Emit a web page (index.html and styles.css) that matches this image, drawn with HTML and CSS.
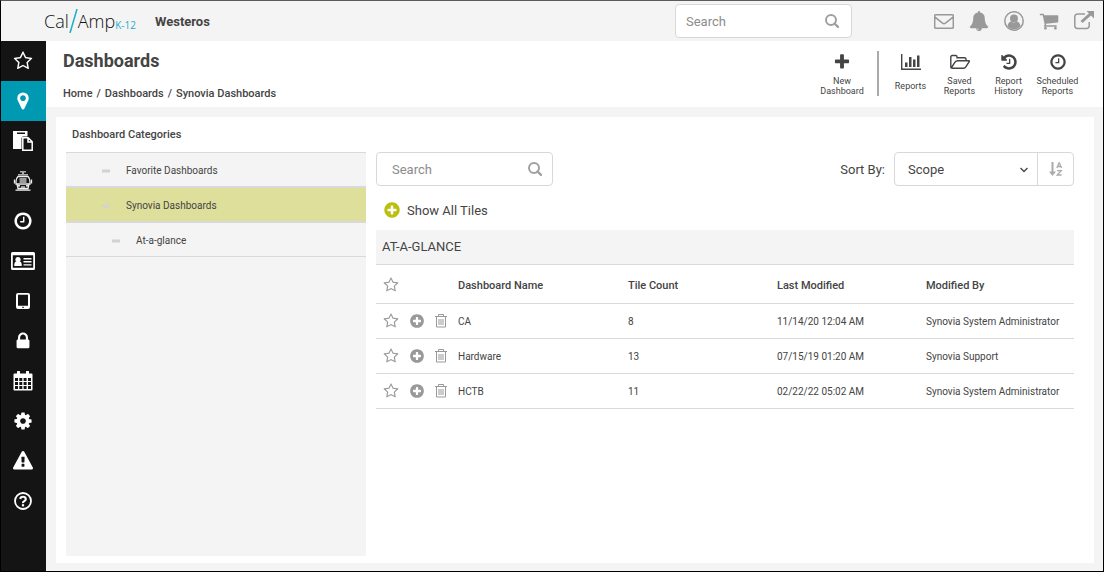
FILE: index.html
```html
<!DOCTYPE html>
<html lang="en">
<head>
    <meta charset="UTF-8">
    <meta name="viewport" content="width=device-width, initial-scale=1.0">
    <title>Dashboards</title>
    <link rel="stylesheet" href="styles.css">
</head>
<body>
    <!-- Shared icons -->
    <svg class="sprite" aria-hidden="true">
        <symbol id="star" viewBox="0 0 1792 1792"><path d="M1201 1004l306-297-422-62-189-382-189 382-422 62 306 297-73 421 378-199 377 199zm527-357q0 22-26 48l-363 354 86 500q1 7 1 20 0 50-41 50-19 0-40-12l-449-236-449 236q-22 12-40 12-21 0-31.5-14.5t-10.5-35.5q0-6 2-20l86-500-364-354q-25-27-25-48 0-37 56-46l502-73 225-455q19-41 49-41t49 41l225 455 502 73q56 9 56 46z"/></symbol>
        <symbol id="clock" viewBox="0 0 1792 1792"><path d="M1024 544v448q0 14-9 23t-23 9h-320q-14 0-23-9t-9-23v-64q0-14 9-23t23-9h224v-352q0-14 9-23t23-9h64q14 0 23 9t9 23zm416 352q0-148-73-273t-198-198-273-73-273 73-198 198-73 273 73 273 198 198 273 73 273-73 198-198 73-273zm224 0q0 209-103 385.5t-279.5 279.5-385.5 103-385.5-103-279.5-279.5-103-385.5 103-385.5 279.5-279.5 385.5-103 385.5 103 279.5 279.5 103 385.5z"/></symbol>
        <symbol id="plus-circle" viewBox="0 0 1792 1792"><path d="M1344 960v-128q0-26-19-45t-45-19h-256v-256q0-26-19-45t-45-19h-128q-26 0-45 19t-19 45v256h-256q-26 0-45 19t-19 45v128q0 26 19 45t45 19h256v256q0 26 19 45t45 19h128q26 0 45-19t19-45v-256h256q26 0 45-19t19-45zm320-64q0 209-103 385.5t-279.5 279.5-385.5 103-385.5-103-279.5-279.5-103-385.5 103-385.5 279.5-279.5 385.5-103 385.5 103 279.5 279.5 103 385.5z"/></symbol>
        <symbol id="search" viewBox="0 0 14 14"><circle cx="6" cy="6" r="5" fill="none" stroke="currentColor" stroke-width="2"/><path d="M9.5 9.5l3.5 3.3" stroke="currentColor" stroke-width="2.4" stroke-linecap="round"/></symbol>
        <symbol id="trash" viewBox="0 0 12 14"><path d="M0 2.500h12M3.500 2.500v-2h5v2M1.500 2.500v10.500h9v-10.500M4 5v6M6 5v6M8 5v6" fill="none" stroke="currentColor"/></symbol>
    </svg>

    <header class="topbar">
        <a class="logo" href="#" aria-label="CalAmp K-12">
            <span>Cal</span>
            <svg class="slash" viewBox="0 0 9 24"><path d="M8 0L1 24" stroke="#18afc9" stroke-width="1.5"/></svg>
            <span>Amp</span>
            <span class="logo-sub">K-12</span>
        </a>
        <span class="district">Westeros</span>
        <form class="search-box">
            <input type="search" placeholder="Search" aria-label="Search site">
            <button type="button" aria-label="Search"><svg><use href="#search"/></svg></button>
        </form>
        <nav class="top-icons">
            <a href="#" aria-label="Messages"><svg viewBox="0 0 20 20"><path d="M1.500 3.700h17a.8.8 0 0 1 .8.8v12a.8.8 0 0 1-.8.8h-17a.8.8 0 0 1-.8-.8v-12a.8.8 0 0 1 .8-.8zM1 6.200l7.500 6q1.500 1.100 3 0L19 6.200" fill="none" stroke="currentColor" stroke-width="1.500"/></svg></a>
            <a href="#" aria-label="Notifications"><svg viewBox="0 0 1792 1792"><path d="M912 1696q0-16-16-16-59 0-101.500-42.500t-42.500-101.500q0-16-16-16t-16 16q0 73 51.500 124.500t124.500 51.500q16 0 16-16zm816-288q0 52-38 90t-90 38h-448q0 106-75 181t-181 75-181-75-75-181h-448q-52 0-90-38t-38-90q50-42 91-88t85-119.500 74.500-158.500 50-206 19.500-260q0-152 117-282.500t307-158.500q-8-19-8-39 0-40 28-68t68-28 68 28 28 68q0 20-8 39 190 28 307 158.500t117 282.500q0 139 19.500 260t50 206 74.500 158.500 85 119.500 91 88z"/></svg></a>
            <a href="#" aria-label="Account"><svg viewBox="0 0 20 20"><circle cx="10" cy="10" r="9.200" fill="none" stroke="currentColor" stroke-width="1.500"/><circle cx="10" cy="7.500" r="4"/><path d="M3.500 15c.6-3 2-4.500 3.700-4.500q2.800 2.300 5.600 0c1.700 0 3.100 1.500 3.700 4.500a8 8 0 0 1-13 0z"/></svg></a>
            <a href="#" aria-label="Cart"><svg viewBox="0 0 1792 1792"><path d="M704 1536q0 52-38 90t-90 38-90-38-38-90 38-90 90-38 90 38 38 90zm896 0q0 52-38 90t-90 38-90-38-38-90 38-90 90-38 90 38 38 90zm128-1088v512q0 24-16.500 42.500t-40.500 21.500l-1044 122q13 60 13 70 0 16-24 64h920q26 0 45 19t19 45-19 45-45 19h-1024q-26 0-45-19t-19-45q0-11 8-31.500t16-36 21.500-40 15.500-29.500l-177-823h-204q-26 0-45-19t-19-45 19-45 45-19h256q16 0 28.500 6.500t19.500 15.500 13 24.500 8 26 5.500 29.500 4.500 26h1201q26 0 45 19t19 45z"/></svg></a>
            <a href="#" aria-label="Sign out"><svg viewBox="0 0 20 20"><path d="M11 3H3.500A2.700 2.700 0 0 0 .8 5.700v9A2.700 2.700 0 0 0 3.500 17.400h9a2.700 2.700 0 0 0 2.700-2.700V11" fill="none" stroke="currentColor" stroke-width="1.500"/><path d="M7.500 11L16.500 2.800" stroke="currentColor" stroke-width="3"/><path d="M12.500 0H20v7.500z"/></svg></a>
        </nav>
    </header>

    <div class="app">
        <nav class="sidebar">
            <a href="#" aria-label="Favorites"><svg><use href="#star"/></svg></a>
            <a href="#" class="active" aria-label="Map"><svg viewBox="0 0 1792 1792"><path d="M1152 640q0-106-75-181t-181-75-181 75-75 181 75 181 181 75 181-75 75-181zm256 0q0 109-33 179l-364 774q-16 33-47.500 52t-67.500 19-67.500-19-46.500-52l-365-774q-33-70-33-179 0-212 150-362t362-150 362 150 150 362z"/></svg></a>
            <a href="#" aria-label="Documents"><svg viewBox="0 0 20 20"><path fill-rule="evenodd" d="M0 0h14.500v5.500H9.500L8.500 7v11H0zM4 1.500v1.500h8v-1.500z"/><path d="M9.800 6.800h5.400l4 4v8.500H9.800zM15 7v4h4.500" fill="none" stroke="currentColor" stroke-width="1.500"/></svg></a>
            <a href="#" aria-label="Buses"><svg viewBox="0 0 20 20"><path d="M7 0h6v1.500h-2V3H9V1.500H7z" fill="#aaa"/><path d="M5 3h10v1.500H5z" fill="#aaa"/><path d="M5 5.500h10q2 2 2 5v2.500H3v-2.500q0-3 2-5z" fill="none" stroke="#eee" stroke-width="1.300"/><path d="M6.500 7h7v5.500h-7zM8 15h4v2H8z" fill="#999"/><path d="M1.500 8.500v4M18.500 8.500v4M4 13l1 4.500h10l1-4.500M2.500 19.200h15" fill="none" stroke="#eee" stroke-width="1.300"/><circle cx="6" cy="14.700" r="1"/><circle cx="14" cy="14.700" r="1"/></svg></a>
            <a href="#" aria-label="Time"><svg><use href="#clock"/></svg></a>
            <a href="#" aria-label="Cards"><svg class="wide" viewBox="0 0 24 18"><path fill-rule="evenodd" d="M1.500 0h21A1.500 1.500 0 0 1 24 1.500v15a1.500 1.500 0 0 1-1.500 1.500h-21A1.500 1.500 0 0 1 0 16.500v-15A1.500 1.500 0 0 1 1.500 0zM1.800 3.200v12.600h20.400V3.200z"/><circle cx="7" cy="7.500" r="2.600"/><path d="M3.200 14q0-4.500 2-4.500h3.600q2 0 2 4.500zM12.500 6h8v1.400h-8zM12.500 9h8v1.400h-8zM12.500 12.200h8v1.400h-8z"/></svg></a>
            <a href="#" aria-label="Tablets"><svg viewBox="0 0 20 20"><path fill-rule="evenodd" d="M5 2h10q2 0 2 2v12q0 2-2 2H5q-2 0-2-2V4q0-2 2-2zM5 3.700v11h10v-11zM9.300 15.700v1.300h1.400v-1.300z"/></svg></a>
            <a href="#" aria-label="Security"><svg viewBox="0 0 1792 1792"><path d="M640 768h512v-192q0-106-75-181t-181-75-181 75-75 181v192zm832 96v576q0 40-28 68t-68 28h-960q-40 0-68-28t-28-68v-576q0-40 28-68t68-28h32v-192q0-184 132-316t316-132 316 132 132 316v192h32q40 0 68 28t28 68z"/></svg></a>
            <a href="#" aria-label="Calendar"><svg viewBox="0 0 20 20"><path fill-rule="evenodd" d="M1.500 2.500H4V1a1 1 0 0 1 3 0v1.500h6V1a1 1 0 0 1 3 0v1.500h2.500a1 1 0 0 1 1 1v15a1 1 0 0 1-1 1h-17a1 1 0 0 1-1-1v-15a1 1 0 0 1 1-1zM2 7v3h3V7zM6.300 7v3h3V7zM10.600 7v3h3V7zM15 7v3h3V7zM2 11v3h3v-3zM6.300 11v3h3v-3zM10.600 11v3h3v-3zM15 11v3h3v-3zM2 15v3h3v-3zM6.300 15v3h3v-3zM10.600 15v3h3v-3zM15 15v3h3v-3z"/></svg></a>
            <a href="#" aria-label="Settings"><svg viewBox="0 0 1792 1792"><path d="M1152 896q0-106-75-181t-181-75-181 75-75 181 75 181 181 75 181-75 75-181zm512-109v222q0 12-8 23t-20 13l-185 28q-19 54-39 91 35 50 107 138 10 12 10 25t-9 23q-27 37-99 108t-94 71q-12 0-26-9l-138-108q-44 23-91 38-16 136-29 186-7 28-36 28h-222q-14 0-24.500-8.500t-11.500-21.500l-28-184q-49-16-90-37l-141 107q-10 9-25 9-14 0-25-11-126-114-165-168-7-10-7-23 0-12 8-23 15-21 51-66.500t54-70.500q-27-50-41-99l-183-27q-13-2-21-12.500t-8-23.500v-222q0-12 8-23t19-13l186-28q14-46 39-92-40-57-107-138-10-12-10-24 0-10 9-23 26-36 98.500-107.500t94.500-71.500q13 0 26 10l138 107q44-23 91-38 16-136 29-186 7-28 36-28h222q14 0 24.500 8.500t11.500 21.500l28 184q49 16 90 37l142-107q9-9 24-9 13 0 25 10 129 119 165 170 7 8 7 22 0 12-8 23-15 21-51 66.500t-54 70.500q26 50 41 98l183 28q13 2 21 12.500t8 23.500z"/></svg></a>
            <a href="#" aria-label="Alerts"><svg viewBox="0 0 1792 1792"><path d="M1024 1375v-190q0-14-9.500-23.500t-22.500-9.500h-192q-13 0-22.500 9.500t-9.500 23.500v190q0 14 9.500 23.500t22.500 9.500h192q13 0 22.500-9.500t9.500-23.500zm-2-374l18-459q0-12-10-19-13-11-24-11h-220q-11 0-24 11-10 7-10 21l17 457q0 10 10 16.500t24 6.500h185q14 0 23.500-6.500t10.500-16.500zm-14-934l768 1408q35 63-2 126-17 29-46.500 46t-63.500 17h-1536q-34 0-63.500-17t-46.500-46q-37-63-2-126l768-1408q17-31 47-49t65-18 65 18 47 49z"/></svg></a>
            <a href="#" aria-label="Help"><svg viewBox="0 0 20 20"><circle cx="10" cy="10" r="8" fill="none" stroke="currentColor" stroke-width="1.800"/><path d="M7.200 8Q7.500 5.700 10 5.700T12.800 8Q12.800 9.300 11.300 10.100T10 12.200" fill="none" stroke="currentColor" stroke-width="2.100"/><path d="M8.900 13.200h2.200v2.200H8.900z"/></svg></a>
        </nav>

        <main class="main">
            <div class="page-head">
                <div>
                    <h1>Dashboards</h1>
                    <nav class="breadcrumb">
                        <a href="#">Home</a><span>/</span><a href="#">Dashboards</a><span>/</span><a href="#">Synovia Dashboards</a>
                    </nav>
                </div>
                <div class="actions">
                    <button type="button" class="action action-new">
                        <svg viewBox="0 0 1792 1792"><path d="M1600 736v192q0 40-28 68t-68 28h-416v416q0 40-28 68t-68 28h-192q-40 0-68-28t-28-68v-416h-416q-40 0-68-28t-28-68v-192q0-40 28-68t68-28h416v-416q0-40 28-68t68-28h192q40 0 68 28t28 68v416h416q40 0 68 28t28 68z"/></svg>
                        <span>New<br>Dashboard</span>
                    </button>
                    <button type="button" class="action">
                        <svg viewBox="0 0 20 16"><path d="M0 0h1.400v14.500H20V16H0zM4 8.500h2.500V13H4zM8 3h2.500v10H8zM12 5.500h2.500V13H12zM16 1.500h2.500V13H16z"/></svg>
                        <span>Reports</span>
                    </button>
                    <button type="button" class="action">
                        <svg viewBox="0 0 20 16"><path d="M.8 13V3Q.8 1.500 2.300 1.500h3.500Q7 1.500 7 3v.7h7.500Q16 3.700 16 5v1.700M1.200 14L5 8.200Q6 6.700 7.500 6.700H19q.8 0 .2 1L16 12.700Q15 14.300 13.500 14.300H2.300Q.8 14.300.8 13" fill="none" stroke="currentColor" stroke-width="1.400"/></svg>
                        <span>Saved<br>Reports</span>
                    </button>
                    <button type="button" class="action">
                        <svg viewBox="0 0 1792 1792"><path d="M1664 896q0 156-61 298t-164 245-245 164-298 61q-172 0-327-72.500t-264-204.500q-7-10-6.500-22.500t8.500-20.500l137-138q10-9 25-9 16 2 23 12 73 95 179 147t225 52q104 0 198.500-40.500t163.500-109.500 109.500-163.500 40.500-198.500-40.500-198.500-109.500-163.500-163.500-109.500-198.500-40.500q-98 0-188 35.500t-160 101.500l137 138q31 30 14 69-17 40-59 40h-448q-26 0-45-19t-19-45v-448q0-42 40-59 39-17 69 14l130 129q107-101 244.500-156.500t284.500-55.500q156 0 298 61t245 164 164 245 61 298zm-640-288v448q0 14-9 23t-23 9h-320q-14 0-23-9t-9-23v-64q0-14 9-23t23-9h224v-352q0-14 9-23t23-9h64q14 0 23 9t9 23z"/></svg>
                        <span>Report<br>History</span>
                    </button>
                    <button type="button" class="action">
                        <svg><use href="#clock"/></svg>
                        <span>Scheduled<br>Reports</span>
                    </button>
                </div>
            </div>

            <div class="panel">
                <aside class="categories">
                    <h2>Dashboard Categories</h2>
                    <ul>
                        <li><a href="#"><svg viewBox="0 0 8 8"><path d="M0 4h8" stroke="currentColor" stroke-width="3"/></svg>Favorite Dashboards</a></li>
                        <li class="selected"><a href="#"><svg viewBox="0 0 8 8"><path d="M.5 2.500L4 6l3.500-3.500" fill="none" stroke="currentColor" stroke-width="2"/></svg>Synovia Dashboards</a></li>
                        <li class="child"><a href="#"><svg viewBox="0 0 8 8"><path d="M0 4h8" stroke="currentColor" stroke-width="3"/></svg>At-a-glance</a></li>
                    </ul>
                </aside>

                <section class="content">
                    <div class="filters">
                        <form class="search-box">
                            <input type="search" placeholder="Search" aria-label="Search dashboards">
                            <button type="button" aria-label="Search"><svg><use href="#search"/></svg></button>
                        </form>
                        <div class="sort">
                            <label for="sort-by">Sort By:</label>
                            <div class="sort-group">
                                <select id="sort-by">
                                    <option>Scope</option>
                                    <option>Name</option>
                                </select>
                                <svg class="chevron" viewBox="0 0 8 6"><path d="M.5 1L4 4.500 7.500 1" fill="none" stroke="currentColor" stroke-width="1.300"/></svg>
                                <button type="button" aria-label="Sort direction"><svg viewBox="0 0 14 14"><path d="M3.500 0v12" stroke="currentColor" stroke-width="2"/><path d="M0 9.500h7L3.500 14z"/><path d="M7.800 6L10.200 .6 12.600 6M8.600 4.500h3.200M8 8.700h4.200L8.200 13h4.400" fill="none" stroke="currentColor" stroke-width="1.300"/></svg></button>
                            </div>
                        </div>
                    </div>
                    <button type="button" class="show-all"><svg><use href="#plus-circle"/></svg>Show All Tiles</button>
                    <h3>AT-A-GLANCE</h3>
                    <table>
                        <thead>
                            <tr>
                                <th class="col-icons"><div class="row-icons"><button type="button" aria-label="Favorite all"><svg><use href="#star"/></svg></button></div></th>
                                <th class="col-name">Dashboard Name</th>
                                <th class="col-data">Tile Count</th>
                                <th class="col-data">Last Modified</th>
                                <th>Modified By</th>
                            </tr>
                        </thead>
                        <tbody>
                            <tr>
                                <td><div class="row-icons"><button type="button" aria-label="Favorite"><svg><use href="#star"/></svg></button><button type="button" aria-label="Add"><svg><use href="#plus-circle"/></svg></button><button type="button" aria-label="Delete"><svg class="trash"><use href="#trash"/></svg></button></div></td>
                                <td>CA</td>
                                <td>8</td>
                                <td>11/14/20 12:04 AM</td>
                                <td>Synovia System Administrator</td>
                            </tr>
                            <tr>
                                <td><div class="row-icons"><button type="button" aria-label="Favorite"><svg><use href="#star"/></svg></button><button type="button" aria-label="Add"><svg><use href="#plus-circle"/></svg></button><button type="button" aria-label="Delete"><svg class="trash"><use href="#trash"/></svg></button></div></td>
                                <td>Hardware</td>
                                <td>13</td>
                                <td>07/15/19 01:20 AM</td>
                                <td>Synovia Support</td>
                            </tr>
                            <tr>
                                <td><div class="row-icons"><button type="button" aria-label="Favorite"><svg><use href="#star"/></svg></button><button type="button" aria-label="Add"><svg><use href="#plus-circle"/></svg></button><button type="button" aria-label="Delete"><svg class="trash"><use href="#trash"/></svg></button></div></td>
                                <td>HCTB</td>
                                <td>11</td>
                                <td>02/22/22 05:02 AM</td>
                                <td>Synovia System Administrator</td>
                            </tr>
                        </tbody>
                    </table>
                </section>
            </div>
        </main>
    </div>
</body>
</html>
```
FILE: styles.css
```css
* {
    box-sizing: border-box;
}
body {
    margin: 0;
    min-height: 100vh;
    display: flex;
    flex-direction: column;
    border: 1px solid #000;
    border-top-color: #5c5960;
    background-color: #f4f4f4;
    color: #444;
    font-family: Roboto, Arial, sans-serif;
    font-size: 13px;
}
a {
    color: inherit;
    text-decoration: none;
}
button {
    padding: 0;
    border: 0;
    background: none;
    color: inherit;
    font: inherit;
    cursor: pointer;
}
svg {
    display: block;
    fill: currentColor;
}
.sprite {
    position: absolute;
    width: 0;
    height: 0;
}

/* Top bar */
.topbar {
    display: flex;
    align-items: center;
    height: 40px;
    padding: 0 9px 0 43px;
}
.logo {
    display: flex;
    align-items: center;
    color: #111;
    font-family: "Open Sans", sans-serif;
    font-size: 18px;
    font-weight: 300;
    line-height: 24px;
}
.slash {
    flex: none;
    width: 9px;
    height: 24px;
}
.logo .logo-sub {
    align-self: flex-end;
    color: #18afc9;
    font-size: 10px;
    font-weight: 400;
    line-height: 16px;
}
.district {
    margin-left: 19px;
    font-weight: 700;
}
.search-box {
    display: flex;
    align-items: center;
    width: 177px;
    height: 34px;
    padding: 0 12px 0 10px;
    border: 1px solid #d8d8d8;
    border-radius: 4px;
    background-color: #fff;
}
.search-box input {
    flex: 1;
    min-width: 0;
    padding: 0;
    border: 0;
    outline: 0;
    background: none;
    color: #444;
    font: inherit;
}
.search-box input::placeholder {
    color: #8c8c8c;
}
.search-box svg {
    width: 14px;
    height: 14px;
    color: #a0a0a0;
}
.topbar .search-box {
    margin-left: auto;
}
.top-icons {
    display: flex;
    gap: 15px;
    margin-left: 82px;
    color: #999;
}
.top-icons svg {
    width: 20px;
    height: 20px;
}

/* Side navigation */
.app {
    flex: 1;
    display: flex;
}
.sidebar {
    flex: none;
    width: 45px;
    background-color: #141414;
    color: #fff;
}
.sidebar a {
    display: flex;
    align-items: center;
    justify-content: center;
    height: 40px;
    padding-right: 1px;
}
.sidebar .active {
    background-color: #0099b2;
}
.sidebar svg {
    width: 20px;
    height: 20px;
}
.sidebar .wide {
    width: 24px;
    height: 18px;
}

/* Page heading */
.main {
    flex: 1;
    min-width: 0;
    display: flex;
    flex-direction: column;
}
.page-head {
    display: flex;
    justify-content: space-between;
    height: 66px;
    padding: 8px 21px 0 17px;
    background-color: #fff;
}
h1 {
    margin: 0;
    font-size: 18px;
    font-weight: 700;
    line-height: 24px;
}
.breadcrumb {
    display: flex;
    gap: 4px;
    margin-top: 12px;
    font-size: 11px;
    font-weight: 500;
    line-height: 18px;
}
.actions {
    display: flex;
    padding-top: 2px;
}
.action {
    display: flex;
    flex-direction: column;
    align-items: center;
    width: 49px;
    height: 45px;
    font-size: 9px;
    line-height: 10px;
}
.action svg {
    width: 20px;
    height: 18px;
    margin: 2px 0 5px;
}
.action span {
    flex: 1;
    display: flex;
    align-items: center;
}
.action-new {
    width: 72px;
    margin-right: 7px;
    border-right: 2px solid #aaa;
}

/* Panel */
.panel {
    flex: 1;
    display: flex;
    gap: 10px;
    margin: 10px 9px 8px 10px;
    padding: 0 20px 7px 10px;
    background-color: #fff;
}
.categories {
    flex: none;
    display: flex;
    flex-direction: column;
    width: 300px;
}
.categories h2 {
    margin: 0;
    padding-left: 6px;
    font-size: 11px;
    font-weight: 500;
    line-height: 35px;
}
.categories ul {
    flex: 1;
    margin: 0;
    padding: 0;
    list-style: none;
    background-color: #f4f4f4;
    border-top: 1px solid #d9d9d9;
}
.categories li {
    border-bottom: 2px solid #d9d9d9;
    font-size: 10px;
}
.categories a {
    display: flex;
    align-items: center;
    gap: 16px;
    height: 33px;
    padding: 2px 0 0 36px;
}
.categories .selected {
    background-color: #dedf9b;
}
.categories .child {
    border-bottom-width: 1px;
}
.categories .child a {
    padding-left: 46px;
}
.categories svg {
    width: 8px;
    height: 8px;
    color: #d2d2d2;
}
.content {
    flex: 1;
    min-width: 0;
    padding-top: 35px;
}
.filters {
    display: flex;
    justify-content: space-between;
}
.filters .search-box {
    padding: 0 10px 0 15px;
}
.sort {
    display: flex;
    align-items: center;
    gap: 9px;
}
.sort-group {
    position: relative;
    display: flex;
    width: 180px;
    height: 34px;
    border: 1px solid #d8d8d8;
    border-radius: 4px;
}
.sort-group select {
    flex: 1;
    padding: 0 13px;
    border: 0;
    background: none;
    color: #444;
    font: inherit;
    appearance: none;
}
.chevron {
    position: absolute;
    top: 14px;
    right: 45px;
    width: 8px;
    height: 6px;
    pointer-events: none;
}
.sort-group button {
    display: flex;
    align-items: center;
    justify-content: center;
    width: 36px;
    border-left: 1px solid #d8d8d8;
    color: #aaa;
}
.sort-group button svg {
    width: 14px;
    height: 14px;
}
.show-all {
    display: flex;
    align-items: center;
    gap: 6px;
    height: 44px;
    padding: 4px 0 0 7px;
}
.show-all svg {
    width: 18px;
    height: 18px;
    color: #b9c00d;
}
h3 {
    margin: 0;
    padding-left: 6px;
    border-bottom: 1px solid #d9d9d9;
    background-color: #f4f4f4;
    font-size: 13px;
    font-weight: 400;
    line-height: 34px;
}
table {
    width: 100%;
    border-spacing: 0;
    table-layout: fixed;
}
th,
td {
    height: 35px;
    padding: 0;
    border-bottom: 1px solid #d9d9d9;
    font-size: 10px;
    text-align: left;
}
th {
    height: 39px;
    padding-top: 2px;
    font-size: 11px;
    font-weight: 500;
}
.col-icons {
    width: 82px;
}
.col-name {
    width: 170px;
}
.col-data {
    width: 149px;
}
.row-icons {
    display: flex;
    gap: 10px;
    margin-left: 7px;
    color: #999;
}
.row-icons svg {
    width: 16px;
    height: 16px;
}
.row-icons .trash {
    width: 12px;
    height: 14px;
}
```
